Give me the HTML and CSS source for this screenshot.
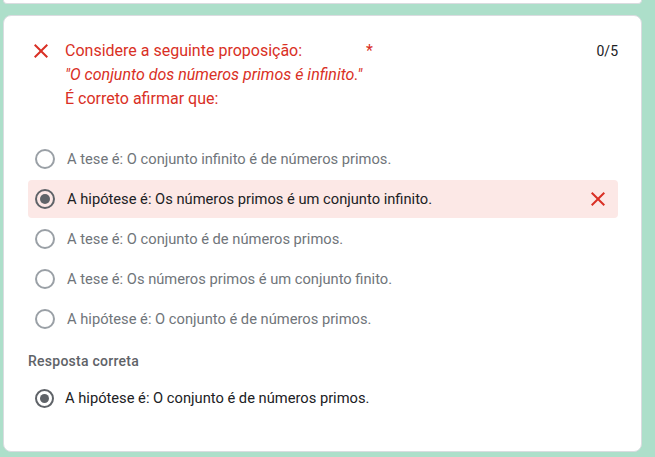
FILE: index.html
```html
<!DOCTYPE html>
<html lang="pt">
<head>
<meta charset="utf-8">
<link rel="stylesheet" href="styles.css">
</head>
<body>
<div class="page">
  <div class="prev-card"></div>
  <div class="card">
    <div class="question">
      <svg class="qicon" width="24" height="24" viewBox="0 0 24 24"><path d="M19 6.41L17.59 5 12 10.59 6.41 5 5 6.41 10.59 12 5 17.59 6.41 19 12 13.41 17.59 19 19 17.59 13.41 12z" fill="#d93025"/></svg>
      <div class="qtext">
        <div class="qline">Considere a seguinte proposição:<span class="req">*</span></div>
        <div class="qline italic">"O conjunto dos números primos é infinito."</div>
        <div class="qline">É correto afirmar que:</div>
      </div>
      <div class="score">0/5</div>
    </div>
    <div class="options">
      <div class="opt"><span class="radio"></span><span class="label">A tese é: O conjunto infinito é de números primos.</span></div>
      <div class="opt wrong"><span class="radio checked"></span><span class="label">A hipótese é: Os números primos é um conjunto infinito.</span>
        <svg class="xmark" width="24" height="24" viewBox="0 0 24 24"><path d="M19 6.41L17.59 5 12 10.59 6.41 5 5 6.41 10.59 12 5 17.59 6.41 19 12 13.41 17.59 19 19 17.59 13.41 12z" fill="#d93025"/></svg></div>
      <div class="opt"><span class="radio"></span><span class="label">A tese é: O conjunto é de números primos.</span></div>
      <div class="opt"><span class="radio"></span><span class="label">A tese é: Os números primos é um conjunto finito.</span></div>
      <div class="opt"><span class="radio"></span><span class="label">A hipótese é: O conjunto é de números primos.</span></div>
    </div>
    <div class="correct-title">Resposta correta</div>
    <div class="correct"><span class="radio checked small"></span><span class="label">A hipótese é: O conjunto é de números primos.</span></div>
  </div>
</div>
</body>
</html>
```

FILE: styles.css
```css
html, body {
  margin: 0;
  padding: 0;
  background: #addfca;
  font-family: Roboto, "Noto Sans", Arial, sans-serif;
}
.page {
  width: 639px;
  margin-left: 3px;
  display: flex;
  flex-direction: column;
}
.prev-card {
  height: 3px;
  background: #fff;
  border-radius: 0 0 8px 8px;
  border: 1px solid #dadce0;
  border-top: none;
}
.card {
  margin-top: 11px;
  height: 437px;
  box-sizing: border-box;
  background: #fff;
  border: 1px solid #dadce0;
  border-radius: 8px;
  padding: 23px 23px 0 24px;
}
.question {
  display: flex;
  align-items: flex-start;
}
.qicon {
  margin-left: 1px;
  flex: none;
}
.qtext {
  margin-left: 12px;
  flex: 1;
  color: #d93025;
  font-size: 16px;
  line-height: 24px;
}
.qline.italic {
  font-style: italic;
}
.req {
  margin-left: 64px;
  color: #d93025;
}
.score {
  font-size: 14px;
  color: #202124;
  line-height: 24px;
}
.options {
  margin-top: 28px;
  display: flex;
  flex-direction: column;
}
.opt {
  height: 40px;
  display: flex;
  align-items: center;
  padding-left: 7px;
  border-radius: 4px;
  font-size: 14.7px;
  color: #70757a;
}
.opt.wrong {
  background: #fce8e6;
  color: #202124;
  height: 38px;
  margin: 1px 0;
}
.xmark {
  margin-left: auto;
  margin-right: 8px;
}
.radio {
  width: 20px;
  height: 20px;
  box-sizing: border-box;
  border: 2px solid #9aa0a6;
  border-radius: 50%;
  flex: none;
  margin-right: 12px;
  position: relative;
}
.radio.checked {
  border-color: #5f6368;
}
.radio.checked::after {
  content: "";
  position: absolute;
  left: 3px;
  top: 3px;
  width: 10px;
  height: 10px;
  border-radius: 50%;
  background: #5f6368;
}
.radio.small {
  width: 19px;
  height: 19px;
}
.radio.small::after {
  width: 9px;
  height: 9px;
}
.correct-title {
  margin-top: 12px;
  font-size: 14px;
  font-weight: 500;
  letter-spacing: 0.25px;
  color: #5f6368;
  line-height: 20px;
}
.correct {
  margin-top: 17px;
  display: flex;
  align-items: center;
  padding-left: 7px;
  font-size: 14.7px;
  color: #202124;
  height: 20px;
}
.correct .radio {
  margin-right: 11px;
}
```
